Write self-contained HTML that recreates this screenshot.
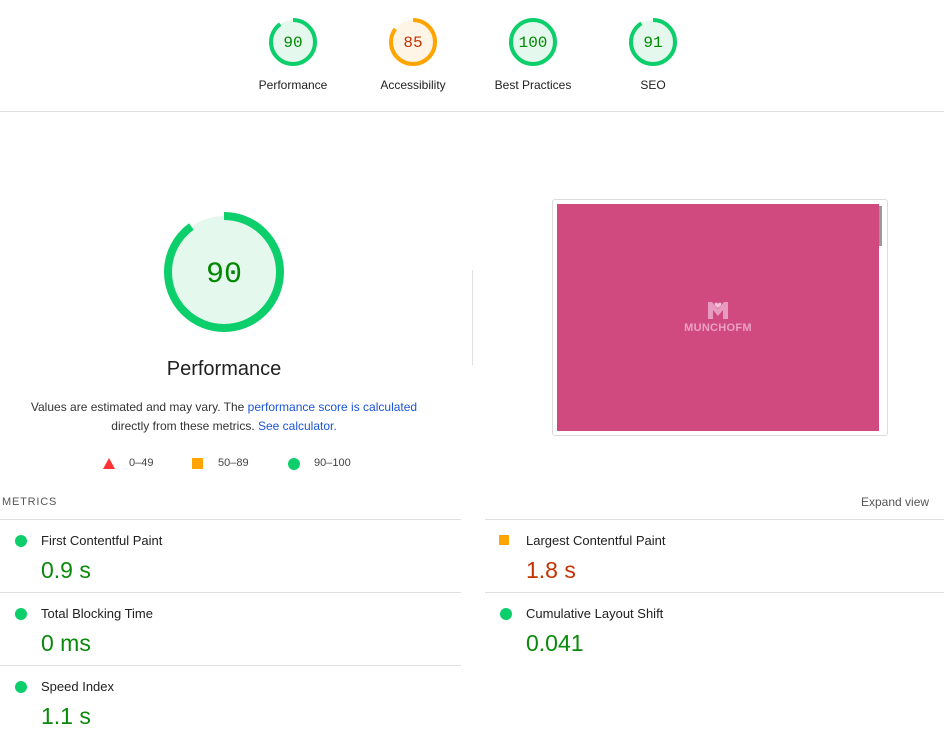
<!DOCTYPE html>
<html><head><meta charset="utf-8"><style>
*{margin:0;padding:0;box-sizing:border-box}
body{width:949px;height:743px;background:#fff;font-family:"Liberation Sans",Roboto,sans-serif;color:#212121;position:relative;overflow:hidden}
.a{position:absolute}
.g{position:absolute;width:120px;text-align:center;font-size:12px;color:#212121}
.g svg{display:block;margin:0 auto}
.lbl{margin-top:11px}
.m{position:absolute;width:461px;height:73px;border-top:1px solid #e0e0e0}
.m .t{position:absolute;left:41px;top:13px;font-size:13px;color:#212121}
.m .v{position:absolute;left:41px;top:37px;font-size:23px;color:#0a8a0a}
.dot{position:absolute;left:15px;top:15px;width:12px;height:12px;border-radius:50%;background:#0cce6b}
.sq{position:absolute;left:14px;top:15px;width:10px;height:10px;background:#ffa400}
</style></head><body>

<div class="g" style="left:233px;top:17px">
<svg width="50" height="50" viewBox="0 0 50 50"><circle cx="25" cy="25" r="22" fill="#e5f8ee"/><circle cx="25" cy="25" r="22" fill="none" stroke="#0cce6b" stroke-width="4" stroke-dasharray="124.4 138.2" transform="rotate(-90 25 25)"/><text x="25" y="30" text-anchor="middle" font-family="Liberation Mono,monospace" font-size="16" fill="#008800">90</text></svg>
<div class="lbl">Performance</div></div>
<div class="g" style="left:353px;top:17px">
<svg width="50" height="50" viewBox="0 0 50 50"><circle cx="25" cy="25" r="22" fill="#fff5e6"/><circle cx="25" cy="25" r="22" fill="none" stroke="#ffa400" stroke-width="4" stroke-dasharray="117.5 138.2" transform="rotate(-90 25 25)"/><text x="25" y="30" text-anchor="middle" font-family="Liberation Mono,monospace" font-size="16" fill="#c33300">85</text></svg>
<div class="lbl">Accessibility</div></div>
<div class="g" style="left:473px;top:17px">
<svg width="50" height="50" viewBox="0 0 50 50"><circle cx="25" cy="25" r="22" fill="#e5f8ee"/><circle cx="25" cy="25" r="22" fill="none" stroke="#0cce6b" stroke-width="4"/><text x="25" y="30" text-anchor="middle" font-family="Liberation Mono,monospace" font-size="16" fill="#008800">100</text></svg>
<div class="lbl">Best Practices</div></div>
<div class="g" style="left:593px;top:17px">
<svg width="50" height="50" viewBox="0 0 50 50"><circle cx="25" cy="25" r="22" fill="#e5f8ee"/><circle cx="25" cy="25" r="22" fill="none" stroke="#0cce6b" stroke-width="4" stroke-dasharray="125.8 138.2" transform="rotate(-90 25 25)"/><text x="25" y="30" text-anchor="middle" font-family="Liberation Mono,monospace" font-size="16" fill="#008800">91</text></svg>
<div class="lbl">SEO</div></div>

<div class="a" style="left:0;top:111px;width:944px;height:1px;background:#e0e0e0"></div>

<svg class="a" style="left:162px;top:210px" width="124" height="124" viewBox="0 0 124 124"><circle cx="62" cy="62" r="56" fill="#e5f8ee"/><circle cx="62" cy="62" r="56" fill="none" stroke="#0cce6b" stroke-width="8" stroke-dasharray="316.7 351.9" transform="rotate(-90 62 62)"/><text x="62" y="72" text-anchor="middle" font-family="Liberation Mono,monospace" font-size="30" fill="#008800">90</text></svg>
<div class="a" style="left:124px;top:358px;width:200px;text-align:center;font-size:20px;color:#212121">Performance</div>
<div class="a" style="left:24px;top:398px;width:400px;text-align:center;font-size:12px;line-height:19px;color:#333">Values are estimated and may vary. The <span style="color:#1a55d8">performance score is calculated</span><br>directly from these metrics. <span style="color:#1a55d8">See calculator.</span></div>
<div class="a" style="left:103px;top:457px;font-size:11px;color:#444">
<svg class="a" style="left:0;top:1px" width="12" height="11"><polygon points="6,0 12,11 0,11" fill="#ff3333"/></svg><span class="a" style="left:26px;top:0;white-space:nowrap">0–49</span>
<span class="a" style="left:89px;top:1px;width:11px;height:11px;background:#ffa400"></span><span class="a" style="left:115px;top:0;white-space:nowrap">50–89</span>
<span class="a" style="left:185px;top:1px;width:12px;height:12px;border-radius:50%;background:#0cce6b"></span><span class="a" style="left:211px;top:0;white-space:nowrap">90–100</span></div>

<div class="a" style="left:472px;top:270px;width:1px;height:95px;background:#e0e0e0"></div>

<div class="a" style="left:552px;top:199px;width:336px;height:237px;border:1px solid #dcdcdc;border-radius:3px;background:#fff"></div>
<div class="a" style="left:557px;top:204px;width:322px;height:227px;background:#d04a7f"></div>
<div class="a" style="left:879px;top:206px;width:3px;height:40px;background:#999"></div>
<div class="a" style="left:707px;top:301px;width:22px;height:18px">
<svg width="22" height="18" viewBox="0 0 22 18"><path d="M1 18V1h4l6 7 6-7h4v17h-5V9l-5 6-5-6v9z" fill="#e79bc0"/><path d="M8 2c1-1 3 0 3 1 0-1 2-2 3-1s0 3-3 5C8 5 7 3 8 2z" fill="#f3c1d8"/></svg></div>
<div class="a" style="left:682px;top:322px;width:72px;text-align:center;font-size:11px;font-weight:bold;color:#eaa1c4;letter-spacing:0.3px">MUNCHOFM</div>

<div class="a" style="left:2px;top:496px;font-size:11px;color:#555;letter-spacing:0.8px">METRICS</div>
<div class="a" style="left:861px;top:495px;font-size:12px;color:#555">Expand view</div>

<div class="m" style="left:0;top:519px"><span class="dot"></span><div class="t">First Contentful Paint</div><div class="v">0.9 s</div></div>
<div class="m" style="left:485px;top:519px;width:459px"><span class="sq"></span><div class="t">Largest Contentful Paint</div><div class="v" style="color:#c33300">1.8 s</div></div>
<div class="m" style="left:0;top:592px"><span class="dot"></span><div class="t">Total Blocking Time</div><div class="v">0 ms</div></div>
<div class="m" style="left:485px;top:592px;width:459px"><span class="dot"></span><div class="t">Cumulative Layout Shift</div><div class="v">0.041</div></div>
<div class="m" style="left:0;top:665px"><span class="dot"></span><div class="t">Speed Index</div><div class="v">1.1 s</div></div>
</body></html>
